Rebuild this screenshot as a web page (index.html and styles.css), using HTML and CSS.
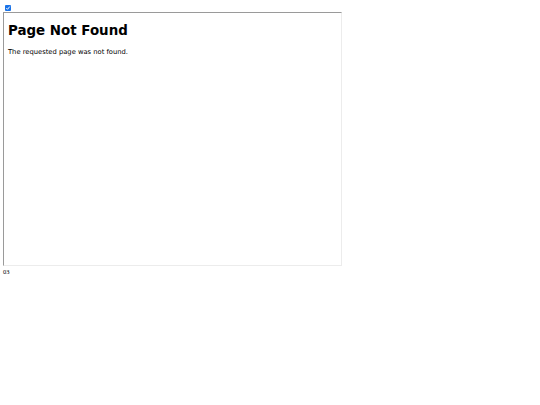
FILE: index.html
```html
<!DOCTYPE html>
<html>
<head>
<meta charset="utf-8">
<link rel="stylesheet" href="styles.css">
</head>
<body>
<div class="page">
  <span class="check"><svg viewBox="0 0 6 6" width="6" height="6"><path d="M1.3 3.1 L2.5 4.3 L4.7 1.6" fill="none" stroke="#fff" stroke-width="1"/></svg></span>
  <div class="frame">
    <h1 class="title">Page Not Found</h1>
    <p class="msg">The requested page was not found.</p>
  </div>
  <div class="foot">03</div>
</div>
</body>
</html>
```
FILE: styles.css
```css
html, body { margin: 0; padding: 0; background: #fff; }
.page { padding: 5px 0 0 3px; }
.check {
  display: block;
  width: 6px; height: 6px;
  margin-left: 2px;
  background: #1a73e8;
  border-radius: 1px;
}
.check svg { display: block; }
.frame {
  box-sizing: border-box;
  margin-top: 1px;
  width: 339px; height: 254px;
  border-top: 1px solid #9a9a9a;
  border-left: 1px solid #9a9a9a;
  border-right: 1px solid #ececec;
  border-bottom: 1px solid #ececec;
  padding: 0 4px;
  font-family: "DejaVu Sans", sans-serif;
  color: #000;
}
.title {
  margin: 10px 0 0 0;
  font-size: 13.4px;
  line-height: 16px;
  font-weight: bold;
}
.msg {
  margin: 9px 0 0 0;
  font-size: 6.75px;
  line-height: 8px;
}
.foot {
  margin-top: 2px;
  font-family: "Liberation Serif", serif;
  font-size: 6.5px;
  line-height: 7px;
  color: #000;
}
```
